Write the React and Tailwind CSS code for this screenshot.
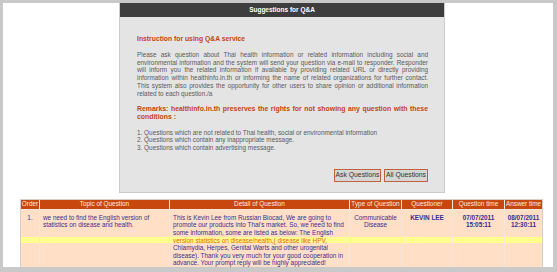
import React from "react";

const rowBg =
  "bg-[linear-gradient(to_bottom,#ffe0c6_0px,#ffe0c6_27px,#ffff8e_27px,#ffff8e_33px,#ffe0c6_33px)]";

const headers = [
  "Order",
  "Topic of Question",
  "Detail of Question",
  "Type of Question",
  "Questioner",
  "Question time",
  "Answer time",
];

const App = () => {
  return (
    <div
      className="w-[557px] h-[272px] bg-[#c9c9c9] pt-[3px] pl-[3px] pr-[4px] pb-[5px]"
      style={{ fontFamily: '"Liberation Sans", Arial, sans-serif' }}
    >
      <div className="bg-white w-full h-full overflow-hidden">
        {/* Suggestions panel */}
        <div className="ml-[116px] w-[326px] bg-[#e4e4e4] border-x border-b border-[#cbcbcb]">
          <div className="h-[14px] bg-[#3e3e3e] flex items-center justify-center text-white text-[6.5px] font-bold">
            Suggestions for Q&amp;A
          </div>
          <div className="pl-[17px] pr-[16px] pt-[18px] pb-[10px] text-[#5b5b5b] text-[6.4px] leading-[7.7px]">
            <div className="text-[#c4450f] font-bold text-[6.8px] leading-[8px]">
              Instruction for using Q&amp;A service
            </div>
            <p className="mt-[8px] text-justify">
              Please ask question about Thai health information or related information including social and
              environmental information and the system will send your question via e-mail to responder. Responder
              will inform you the related information if available by providing related URL or directly providing
              information within healthinfo.in.th or informing the name of related organizations for further contact.
              This system also provides the opportunity for other users to share opinion or additional information
              related to each question./a
            </p>
            <p className="mt-[8px] text-justify text-[#c4450f] font-bold text-[6.9px]">
              Remarks: healthinfo.in.th preserves the rights for not showing any question with these conditions :
            </p>
            <div className="mt-[8px]">
              <div>1. Questions which are not related to Thai health, social or environmental information</div>
              <div>2. Questions which contain any inappropriate message.</div>
              <div>3. Questions which contain advertising message.</div>
            </div>
            <div className="mt-[17px] flex justify-end gap-[3px]">
              <button className="h-[13px] w-[47px] bg-[#d6d6d6] border border-[#c0623e] text-[#333] text-[6.8px] leading-none whitespace-nowrap">
                Ask Questions
              </button>
              <button className="h-[13px] w-[44px] bg-[#d6d6d6] border border-[#c0623e] text-[#333] text-[6.8px] leading-none whitespace-nowrap">
                All Questions
              </button>
            </div>
          </div>
        </div>

        {/* Question table */}
        <div className="mt-[6px] ml-[17px] w-[523px] bg-[#f3e6dc] border border-[#d9cfc8] grid grid-cols-[18px_129px_179px_51px_50px_51px_37px] gap-px text-[6.4px] leading-[7.6px]">
          {headers.map((h) => (
            <div
              key={h}
              className="h-[9px] bg-[#c8470f] text-[#ffe9dc] flex items-center justify-center whitespace-nowrap overflow-hidden"
            >
              {h}
            </div>
          ))}

          <div className={`${rowBg} h-[70px] pt-[4px] text-center text-[#3b2d8e]`}>1.</div>
          <div className={`${rowBg} pt-[4px] pl-[3px] text-[#3b2d8e] whitespace-nowrap`}>
            we need to find the English version of
            <br />
            statistics on disease and health.
          </div>
          <div className={`${rowBg} pt-[4px] pl-[3px] text-[#3b2d8e] whitespace-nowrap`}>
            This is Kevin Lee from Russian Biocad, We are going to
            <br />
            promote our products into Thai's market. So, we need to find
            <br />
            some information, some are listed as below: The English
            <br />
            <span className="text-[#e8640a]">version statistics on disease/health,( disease like HPV,</span>
            <br />
            Chlamydia, Herpes, Genital Warts and other urogenital
            <br />
            disease). Thank you very much for your good cooperation in
            <br />
            advance. Your prompt reply will be highly appreciated!
          </div>
          <div className={`${rowBg} pt-[4px] text-center text-[#3b2d8e]`}>
            Communicable
            <br />
            Disease
          </div>
          <div className={`${rowBg} pt-[4px] text-center text-[#3b2d8e] font-bold`}>KEVIN LEE</div>
          <div className={`${rowBg} pt-[4px] text-center text-[#3b2d8e] font-bold`}>
            07/07/2011
            <br />
            15:05:11
          </div>
          <div className={`${rowBg} pt-[4px] text-center text-[#3b2d8e] font-bold`}>
            08/07/2011
            <br />
            12:30:11
          </div>
        </div>
      </div>
    </div>
  );
};

export default App;
